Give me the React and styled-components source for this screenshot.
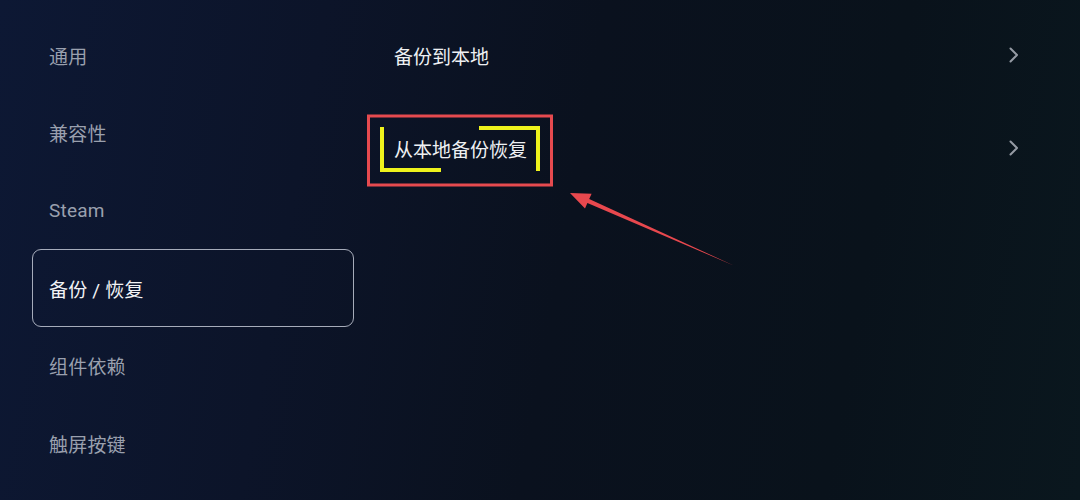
import styled, { createGlobalStyle } from "styled-components"

const Global = createGlobalStyle`
    html, body {
        margin: 0;
        padding: 0;
        background: #0a111c;
    }
    * {
        box-sizing: border-box;
    }
`

const Page = styled.div`
    position: relative;
    width: 1080px;
    height: 500px;
    overflow: hidden;
    display: flex;
    font-family: Roboto, "Noto Sans CJK SC", sans-serif;
    background: linear-gradient(100deg, #0d1834 0%, #0c1429 28%, #0a111e 52%, #09121b 78%, #0a171e 100%);
`

const Sidebar = styled.nav`
    width: 354px;
    padding: 16.5px 0 0 32px;
    display: flex;
    flex-direction: column;
`

const MenuItem = styled.div`
    height: 77.6px;
    display: flex;
    align-items: center;
    padding-left: 16px;
    border-radius: 9px;
    border: 1.5px solid ${p => (p.$active ? "rgba(205,210,222,0.8)" : "transparent")};
    color: ${p => (p.$active ? "#f2f3f5" : "#9aa0ae")};
    font-size: 19px;
    letter-spacing: 0.2px;
`

const Content = styled.main`
    flex: 1;
    padding: 8.5px 61px 0 40px;
    display: flex;
    flex-direction: column;
`

const Row = styled.div`
    height: 93px;
    display: flex;
    align-items: center;
    justify-content: space-between;
    color: #eef0f3;
    font-size: 19px;
`

const Overlay = styled.svg`
    position: absolute;
    left: 0;
    top: 0;
    pointer-events: none;
`

const Chevron = () => (
    <svg width="10" height="16" viewBox="0 0 10 16">
        <polyline points="1.5,1.5 8,8 1.5,14.5" fill="none" stroke="#959ba4" strokeWidth="2" strokeLinecap="round" strokeLinejoin="round" />
    </svg>
)

const menu = ["通用", "兼容性", "Steam", "备份 / 恢复", "组件依赖", "触屏按键"]
const rows = ["备份到本地", "从本地备份恢复"]

const App = () => {
    return (
        <Page>
            <Global />
            <Sidebar>
                {menu.map(m => (
                    <MenuItem key={m} $active={m === "备份 / 恢复"}>{m}</MenuItem>
                ))}
            </Sidebar>
            <Content>
                {rows.map(r => (
                    <Row key={r}>
                        <span>{r}</span>
                        <Chevron />
                    </Row>
                ))}
            </Content>
            {/* 标注层 */}
            <Overlay width="1080" height="500" viewBox="0 0 1080 500">
                <rect x="368.5" y="116" width="183" height="69" fill="none" stroke="#e64a4f" strokeWidth="3" />
                <polyline points="382,127 382,170 441,170" fill="none" stroke="#eef21c" strokeWidth="4" />
                <polyline points="479,128 538,128 538,171" fill="none" stroke="#eef21c" strokeWidth="4" />
                <polygon points="570,193 591.6,193.8 589.2,199.1 734.2,265.7 587.4,203.1 585,208.4" fill="#e8484e" />
            </Overlay>
        </Page>
    )
}

export default App
